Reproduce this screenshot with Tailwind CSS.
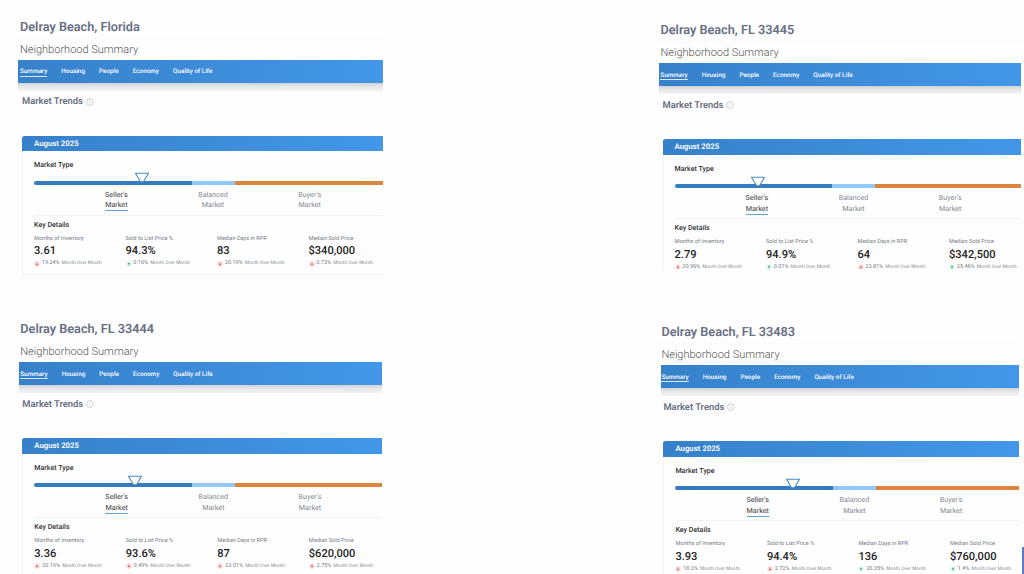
<!DOCTYPE html>
<html lang="en">
<head>
  <meta charset="UTF-8" />
  <meta name="viewport" content="width=device-width, initial-scale=1.0" />
  <title>Neighborhood Summary</title>
  <script src="https://cdn.jsdelivr.net/npm/@tailwindcss/browser@4"></script>
</head>
<body class="bg-[#fefefe] font-[Roboto,sans-serif] [text-rendering:geometricPrecision] h-[574px] overflow-hidden relative">
  <main id="areas" class="grid grid-cols-[640px_384px] grid-rows-[302px_272px] h-[574px] overflow-hidden"></main>

  <!-- edge of the scroll handle -->
  <div class="absolute right-0 bottom-0 w-[2px] h-[27px] bg-[#5b7cc4]"></div>

  <script>
    const areas = [
      {
        name: "Delray Beach, Florida",
        box: "ml-[18px] w-[365px] h-[276px]",
        inset: "",
        menu: "pl-[2px]",
        pointer: 107.5,
        stats: [["3.61", "down", "19.24%"], ["94.3%", "up", "0.16%"], ["83", "down", "20.19%"], ["$340,000", "down", "0.73%"]],
      },
      {
        name: "Delray Beach, FL 33445",
        box: "ml-[18.5px] w-[362.5px] mt-[3.3px] h-[267.7px]",
        inset: "",
        menu: "pl-[1.8px]",
        pointer: 83.5,
        stats: [["2.79", "down", "20.96%"], ["94.9%", "up", "0.01%"], ["64", "down", "23.81%"], ["$342,500", "up", "25.46%"]],
      },
      {
        name: "Delray Beach, FL 33444",
        box: "ml-[18.3px] w-[363.7px] mt-[0.3px] h-[272px]",
        inset: "ml-[0.7px]",
        menu: "pl-[1.3px]",
        pointer: 100.5,
        stats: [["3.36", "down", "20.19%"], ["93.6%", "down", "0.49%"], ["87", "down", "23.01%"], ["$620,000", "down", "2.75%"]],
      },
      {
        name: "Delray Beach, FL 33483",
        box: "ml-[19.4px] w-[359.6px] mt-[3.4px] h-[269px]",
        inset: "ml-[1.6px]",
        menu: "pl-[0.4px]",
        pointer: 117.5,
        stats: [["3.93", "down", "18.3%"], ["94.4%", "down", "2.72%"], ["136", "up", "20.35%"], ["$760,000", "up", "1.4%"]],
      },
    ];

    const labels = ["Months of Inventory", "Sold to List Price %", "Median Days in RPR", "Median Sold Price"];

    const arrows = {
      down: `<svg class="size-[6px]" viewBox="0 0 12 12"><circle cx="6" cy="6" r="5.5" fill="#fbdcdc" /><path d="M6 3v5M4 6.2 6 8.4l2-2.2" fill="none" stroke="#d9534f" stroke-width="1.6" /></svg>`,
      up: `<svg class="size-[6px]" viewBox="0 0 12 12"><circle cx="6" cy="6" r="5.5" fill="#def7ea" /><path d="M6 9V4M4 5.8 6 3.6l2 2.2" fill="none" stroke="#2fa87a" stroke-width="1.6" /></svg>`,
    };

    const stat = ([value, dir, change], i) => `
      <div class="w-[91.5px] shrink-0 whitespace-nowrap">
        <p class="text-[5.6px] leading-[8px] text-[#757b88]">${labels[i]}</p>
        <p class="mt-[1.6px] text-[11.1px] leading-[13px] font-medium text-[#222]">${value}</p>
        <p class="mt-[2px] flex items-center leading-[8px] text-[#757b88]">
          ${arrows[dir]}
          <span class="ml-[1.8px] flex items-baseline gap-[2.2px] text-[5.5px]">${change} <span class="text-[4.8px] text-[#858b96]">Month Over Month</span></span>
        </p>
      </div>`;

    document.getElementById("areas").innerHTML = areas.map((area) => `
      <section class="${area.box} overflow-hidden">
        <h1 class="pt-[18.6px] pl-[2px] text-[12.7px] leading-[17px] font-semibold text-[#687083]">${area.name}</h1>
        <div class="mt-[2.4px] h-px bg-[#fafafa]"></div>
        <h2 class="pl-[2px] mt-[2px] h-[19px] text-[11px] leading-[17px] font-light text-[#555]">Neighborhood Summary</h2>

        <div class="${area.inset}">
          <nav class="h-[23px] bg-linear-to-r from-[#3781ca] to-[#4297e9]">
            <ul class="${area.menu} pt-[7.5px] flex gap-[14.1px] text-[6.35px] leading-[8px] font-medium text-white whitespace-nowrap">
              <li class="border-b border-white/80 h-[9.6px]">Summary</li>
              <li>Housing</li>
              <li>People</li>
              <li>Economy</li>
              <li>Quality of Life</li>
            </ul>
          </nav>
          <div class="h-[8px] bg-linear-to-b from-[#cfd2d7] via-[#e8e9eb] to-[#f3f3f5]"></div>
        </div>

        <h3 class="pl-[4px] mt-[4.4px] flex items-center gap-[3px] text-[9.4px] leading-[13px] font-semibold text-[#687083]">
          Market Trends
          <svg class="size-[8px]" viewBox="0 0 16 16" fill="none" stroke="#b6bac3" stroke-width="1.3"><circle cx="8" cy="8" r="6.8" /><path d="M8 7v4.5M8 4v1.6" /></svg>
        </h3>

        <div class="ml-[4px] mt-[27.3px] h-[139px]">
          <div class="h-[15.6px] pl-[12px] rounded-tl-[2.5px] bg-linear-to-r from-[#3781ca] to-[#4297e9] text-[7.8px] leading-[15px] font-semibold text-white">August 2025</div>
          <div class="h-[123.4px] pl-[11px] border-l border-b border-[#f3f3f4]">
            <h4 class="pt-[9px] h-[20px] text-[7.1px] leading-[10px] font-medium text-[#333]">Market Type</h4>

            <div class="relative mt-[9.6px] flex h-[4px] w-[400px]">
              <span class="w-[157.5px] rounded-l-full bg-[#347cc0]"></span>
              <span class="w-[43px] bg-[#90c8fa]"></span>
              <span class="flex-1 bg-[#db853d]"></span>
              <svg class="absolute -top-[8.5px] w-[15px] h-[12px] -translate-x-1/2" style="left: ${area.pointer}px" viewBox="0 0 15 12"><path d="M1 1.3h13L9 9.8H6z" fill="#fff" stroke="#4a8bc2" stroke-width="1.1" stroke-linejoin="round" /></svg>
            </div>

            <div class="mt-[4.9px] ml-[34px] flex h-[25.1px] text-[7.2px] leading-[10.7px] text-center text-[#858a95]">
              <div class="w-[96.7px] shrink-0 text-[#3c3c3c]">Seller's<br /><span class="inline-block h-[11px] border-b border-[#5ba3d9]">Market</span></div>
              <div class="w-[96.7px] shrink-0">Balanced<br />Market</div>
              <div class="w-[96.7px] shrink-0">Buyer's<br />Market</div>
            </div>

            <div class="h-px bg-[#f3f3f4]"></div>
            <h4 class="mt-[4px] text-[7.1px] leading-[10px] font-medium text-[#333]">Key Details</h4>
            <div class="mt-[4.9px] flex">${area.stats.map(stat).join("")}</div>
          </div>
        </div>
      </section>`).join("");
  </script>
</body>
</html>
